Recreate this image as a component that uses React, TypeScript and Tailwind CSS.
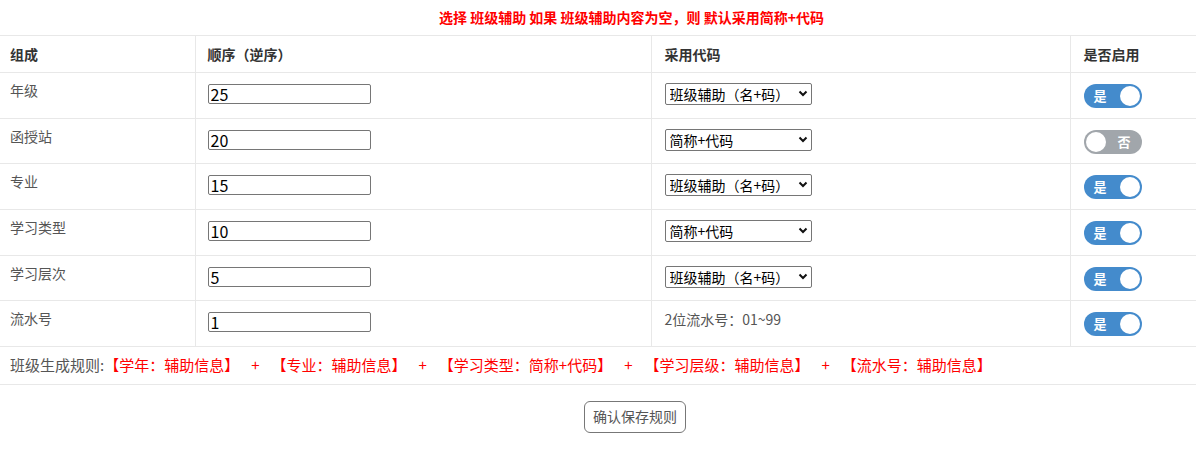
import { useState } from 'react';

type Part = {
  name: string;
  order: string;
  code: 'aux' | 'short' | 'serial';
  enabled: boolean;
};

const initialParts: Part[] = [
  { name: '年级', order: '25', code: 'aux', enabled: true },
  { name: '函授站', order: '20', code: 'short', enabled: false },
  { name: '专业', order: '15', code: 'aux', enabled: true },
  { name: '学习类型', order: '10', code: 'short', enabled: true },
  { name: '学习层次', order: '5', code: 'aux', enabled: true },
  { name: '流水号', order: '1', code: 'serial', enabled: true },
];

const rules = [
  '【学年：辅助信息】',
  '【专业：辅助信息】',
  '【学习类型：简称+代码】',
  '【学习层级：辅助信息】',
  '【流水号：辅助信息】',
];

const Toggle = ({ on, onClick }: { on: boolean; onClick: () => void }) => (
  <button
    onClick={onClick}
    className={`relative flex items-center w-[58px] h-[24px] rounded-full ${
      on ? 'bg-[#448bcc]' : 'bg-[#a1a6ab]'
    }`}
  >
    {on ? (
      <>
        <span className="ml-[10px] text-[13px] leading-[24px] font-bold text-white">是</span>
        <span className="absolute right-[2px] top-[2px] w-[20px] h-[20px] rounded-full bg-white" />
      </>
    ) : (
      <>
        <span className="absolute left-[2px] top-[2px] w-[20px] h-[20px] rounded-full bg-white" />
        <span className="ml-[34px] text-[13px] leading-[24px] font-bold text-white">否</span>
      </>
    )}
  </button>
);

const App = () => {
  const [parts, setParts] = useState<Part[]>(initialParts);

  const toggle = (i: number) =>
    setParts((p) => p.map((x, j) => (j === i ? { ...x, enabled: !x.enabled } : x)));

  return (
    <div className="w-[1196px] h-[451px] bg-white font-['Noto_Sans_CJK_SC',sans-serif] text-[14px] text-[#555]">
      {/* Hint */}
      <div className="h-[35px] pl-[439px] pt-[7px] leading-[20px] font-bold text-[#ff0000]">
        选择 班级辅助 如果 班级辅助内容为空，则 默认采用简称+代码
      </div>

      <table className="w-full table-fixed border-collapse">
        <colgroup>
          <col className="w-[195px]" />
          <col className="w-[456px]" />
          <col className="w-[419px]" />
          <col className="w-[126px]" />
        </colgroup>
        <thead>
          <tr className="h-[37px] border-t border-[#e8e8e8] text-[#333] font-bold">
            <th className="pl-[10px] text-left leading-[20px]">组成</th>
            <th className="pl-[12px] text-left leading-[20px] border-l border-[#e8e8e8]">顺序（逆序）</th>
            <th className="pl-[13px] text-left leading-[20px] border-l border-[#e8e8e8]">采用代码</th>
            <th className="pl-[13px] text-left leading-[20px] border-l border-[#e8e8e8]">是否启用</th>
          </tr>
        </thead>
        <tbody>
          {parts.map((p, i) => (
            <tr key={p.name} className="h-[45.67px] border-t border-[#e8e8e8] align-top">
              <td className="pl-[10px] pt-[7px] leading-[20px]">{p.name}</td>
              <td className="pl-[12px] pt-[11px] border-l border-[#e8e8e8]">
                <input
                  defaultValue={p.order}
                  className="block w-[163px] h-[20px] px-[2px] border border-[#767676] rounded-[2px] text-[16px] leading-[18px] text-black"
                />
              </td>
              <td className="pl-[13px] border-l border-[#e8e8e8]">
                {p.code === 'serial' ? (
                  <div className="pt-[8px] leading-[20px]">2位流水号：01~99</div>
                ) : (
                  <div className="relative w-[147px] h-[22px] mt-[10px]">
                    <select
                      defaultValue={p.code}
                      className="block w-full h-full appearance-none pl-[4px] border border-[#767676] rounded-[2px] text-[14px] leading-[20px] text-black"
                    >
                      <option value="aux">班级辅助（名+码）</option>
                      <option value="short">简称+代码</option>
                    </select>
                    <svg
                      className="absolute right-[4px] top-[7px] pointer-events-none"
                      width="10"
                      height="7"
                      viewBox="0 0 10 7"
                    >
                      <path d="M1.5 1.5 L5 5 L8.5 1.5" fill="none" stroke="#111" strokeWidth="2" />
                    </svg>
                  </div>
                )}
              </td>
              <td className="pl-[13px] pt-[11px] border-l border-[#e8e8e8]">
                <Toggle on={p.enabled} onClick={() => toggle(i)} />
              </td>
            </tr>
          ))}
          <tr className="h-[38px] border-t border-b border-[#e8e8e8]">
            <td colSpan={4} className="pl-[10px] text-[15px] leading-[20px] whitespace-nowrap">
              班级生成规则:
              {rules.map((r, i) => (
                <span key={r} className="text-[#ff0000]">
                  {i > 0 && <span className="mx-[12px]">+</span>}
                  {r}
                </span>
              ))}
            </td>
          </tr>
        </tbody>
      </table>

      <div className="flex justify-center pt-[16px]">
        <button className="h-[32px] px-[8px] ml-[74px] border border-[#777] rounded-[6px] text-[14px] text-[#555] bg-white">
          确认保存规则
        </button>
      </div>
    </div>
  );
};

export default App;
